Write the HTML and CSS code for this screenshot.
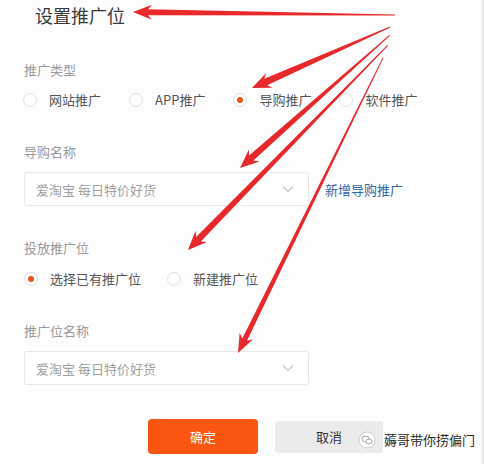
FILE: index.html
```html
<!DOCTYPE html>
<html lang="zh">
<head>
<meta charset="utf-8">
<link rel="stylesheet" href="styles.css">
</head>
<body>
<div class="page">
  <h1 class="title">设置推广位</h1>

  <div class="label first">推广类型</div>
  <div class="radios">
    <label class="radio"><span class="dot"></span><span>网站推广</span></label>
    <label class="radio"><span class="dot"></span><span>APP推广</span></label>
    <label class="radio on"><span class="dot"></span><span>导购推广</span></label>
    <label class="radio"><span class="dot"></span><span>软件推广</span></label>
  </div>

  <div class="label">导购名称</div>
  <div class="field-row">
    <div class="select">
      <span>爱淘宝 每日特价好货</span>
      <svg class="chev" width="12" height="8" viewBox="0 0 12 8"><path d="M1 1.5 L6 6.5 L11 1.5" fill="none" stroke="#c4c4c4" stroke-width="1.2"/></svg>
    </div>
    <a class="link">新增导购推广</a>
  </div>

  <div class="label">投放推广位</div>
  <div class="radios second">
    <label class="radio on"><span class="dot"></span><span>选择已有推广位</span></label>
    <label class="radio"><span class="dot"></span><span>新建推广位</span></label>
  </div>

  <div class="label">推广位名称</div>
  <div class="field-row">
    <div class="select">
      <span>爱淘宝 每日特价好货</span>
      <svg class="chev" width="12" height="8" viewBox="0 0 12 8"><path d="M1 1.5 L6 6.5 L11 1.5" fill="none" stroke="#c4c4c4" stroke-width="1.2"/></svg>
    </div>
  </div>

  <div class="buttons">
    <button class="btn primary">确定</button>
    <button class="btn plain">取消</button>
  </div>

  <div class="watermark">
    <svg width="18" height="18" viewBox="0 0 18 18">
      <circle cx="9" cy="9" r="8" fill="#fff" stroke="#cfcfcf" stroke-width="1"/>
      <ellipse cx="7.5" cy="8" rx="3.6" ry="2.9" fill="none" stroke="#9a9a9a" stroke-width="0.9"/>
      <ellipse cx="11" cy="10.5" rx="3" ry="2.4" fill="#fff" stroke="#9a9a9a" stroke-width="0.9"/>
    </svg>
    <span>薅哥带你捞偏门</span>
  </div>

  <svg class="arrows" width="484" height="464" viewBox="0 0 484 464">
    <g fill="#e8292b">
      <polygon transform="translate(133 12) rotate(180.66)" points="-262,-0.6 -15,-3 -19,-7.5 0,0 -19,7.5 -15,3 -262,0.6"/>
      <polygon transform="translate(252 88) rotate(156.15)" points="-151,-0.6 -15,-3.6 -19,-8 0,0 -19,8 -15,3.6 -151,0.6"/>
      <polygon transform="translate(240 168) rotate(138.44)" points="-200,-0.5 -15,-3.3 -19,-8 0,0 -19,8 -15,3.3 -200,0.5"/>
      <polygon transform="translate(188 250) rotate(134.29)" points="-286,-0.5 -15,-3.3 -19,-8 0,0 -19,8 -15,3.3 -286,0.5"/>
      <polygon transform="translate(238 353) rotate(116.17)" points="-329,-0.4 -15,-2.6 -19,-7.5 0,0 -19,7.5 -15,2.6 -329,0.4"/>
    </g>
  </svg>
</div>
</body>
</html>
```
FILE: styles.css
```css
* { box-sizing: border-box; }
html, body { margin: 0; padding: 0; }
body {
  background: #fff;
  font-family: "Noto Sans CJK SC", "Noto Sans", sans-serif;
  width: 484px;
  height: 464px;
  overflow: hidden;
}
.page {
  position: relative;
  width: 484px;
  height: 464px;
  padding-left: 24px;
  background: #fdfdfd;
  border-right: 2px solid #e6e6e6;
}
.title {
  margin: 0 0 0 11px;
  font-size: 18px;
  font-weight: normal;
  line-height: 30px;
  color: #3a3a3a;
}
.label {
  font-size: 13px;
  line-height: 20px;
  color: #9a9a9a;
  margin-top: 32px;
}
.label.first { margin-top: 30px; }
.radios {
  display: flex;
  gap: 28px;
  margin-top: 10px;
  margin-left: -1px;
  height: 20px;
  align-items: center;
}
.radios.second { margin-top: 11px; gap: 26px; margin-left: 0; }
.radio {
  display: flex;
  align-items: center;
  gap: 12px;
  font-size: 13px;
  line-height: 20px;
  color: #555;
}
.dot {
  width: 14px;
  height: 14px;
  border-radius: 50%;
  border: 1px solid #e0e0e0;
  background: #fff;
  display: flex;
  align-items: center;
  justify-content: center;
}
.radio.on .dot::after {
  content: "";
  width: 6px;
  height: 6px;
  border-radius: 50%;
  background: #e9561c;
}
.field-row {
  display: flex;
  align-items: center;
  gap: 16px;
  margin-top: 10px;
}
.select {
  width: 285px;
  height: 34px;
  border: 1px solid #e8e8e8;
  border-radius: 3px;
  background: #fff;
  display: flex;
  align-items: center;
  justify-content: space-between;
  padding: 0 14px 0 11px;
  font-size: 13px;
  color: #a0a0a0;
}
.link {
  font-size: 13px;
  color: #2f6aaa;
}
.buttons {
  display: flex;
  align-items: center;
  gap: 17px;
  margin-top: 34px;
  margin-left: 124px;
}
.btn {
  font-family: inherit;
  font-size: 13px;
  border: none;
  border-radius: 4px;
  height: 35px;
  padding: 0;
}
.btn.primary {
  width: 110px;
  background: #fb5512;
  color: #fff;
}
.btn.plain {
  width: 108px;
  height: 32px;
  background: #ebebeb;
  color: #333;
}
.watermark {
  position: absolute;
  left: 358px;
  top: 430px;
  display: flex;
  align-items: center;
  gap: 8px;
  font-size: 13px;
  color: #2a2a2a;
}
.arrows {
  position: absolute;
  left: 0;
  top: 0;
  pointer-events: none;
}
```
